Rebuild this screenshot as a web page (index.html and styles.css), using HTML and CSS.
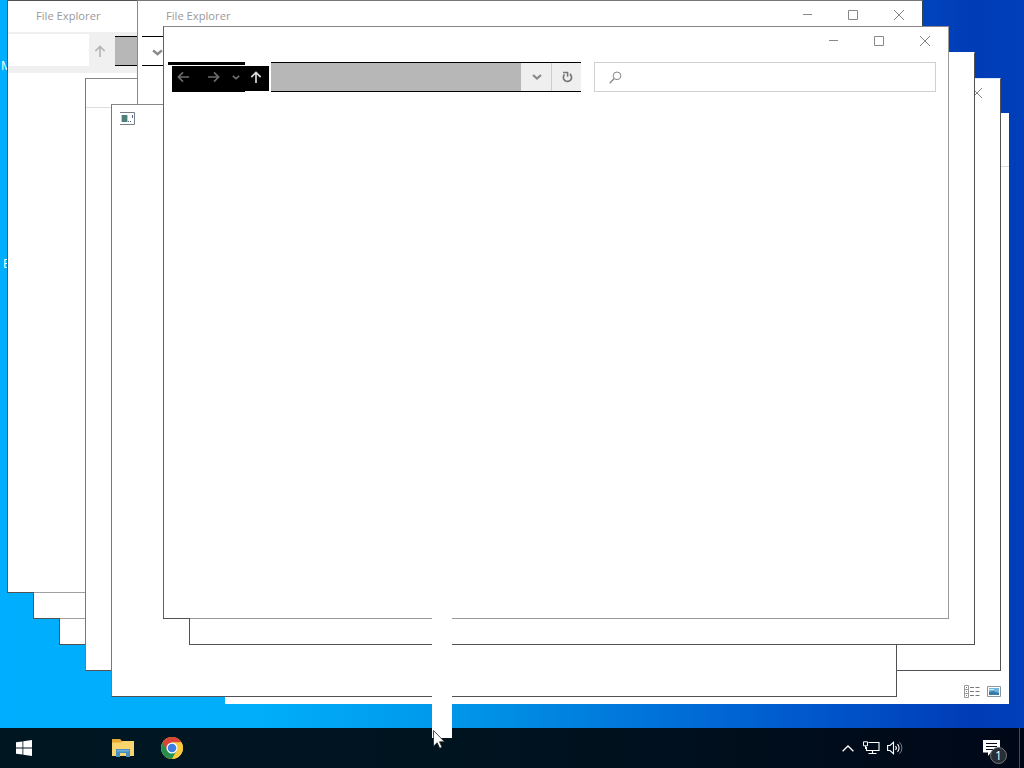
FILE: index.html
```html
<!DOCTYPE html>
<html lang="en">
<head>
    <meta charset="UTF-8">
    <meta name="viewport" content="width=device-width, initial-scale=1.0">
    <title>Desktop</title>
    <link rel="stylesheet" href="styles.css">
</head>
<body>
    <!-- shared icons -->
    <svg class="sprite">
        <symbol id="i-left" viewBox="0 0 14 12"><path d="M13 6H1.5M6.5 1L1.5 6l5 5" fill="none" stroke="currentColor" stroke-width="1.8"/></symbol>
        <symbol id="i-right" viewBox="0 0 14 12"><path d="M1 6h11.500M7.500 1l5 5-5 5" fill="none" stroke="currentColor" stroke-width="1.8"/></symbol>
        <symbol id="i-up" viewBox="0 0 12 14"><path d="M6 13V1.500M1 6.500l5-5 5 5" fill="none" stroke="currentColor" stroke-width="1.8"/></symbol>
        <symbol id="i-down" viewBox="0 0 10 6"><path d="M1 1l4 3.500L9 1" fill="none" stroke="currentColor" stroke-width="2.200"/></symbol>
        <symbol id="i-min" viewBox="0 0 10 10"><path d="M1 4.500h9" stroke="currentColor"/></symbol>
        <symbol id="i-max" viewBox="0 0 10 10"><path d="M.5.500h9v9h-9z" fill="none" stroke="currentColor"/></symbol>
        <symbol id="i-close" viewBox="0 0 10 10"><path d="M0 0l10 10M10 0L0 10" stroke="currentColor"/></symbol>
    </svg>

    <div class="desktop">
        <span class="label label-top">M</span>
        <span class="label label-mid">E</span>

        <div class="window w-back">
            <div class="head"></div>
            <div class="status">
                <svg width="16" height="13" viewBox="0 0 16 13"><path d="M.5.500h4v12h-4zM.5 4.500h4M.5 8.500h4" fill="none" stroke="#999"/><path d="M2 2.500h1M2 6.500h1M2 10.500h1M6 2.500h4M11.500 2.500h4M6 6.500h4M11.500 6.500h4M6 10.500h4M11.500 10.500h4" stroke="#777"/></svg>
                <svg width="14" height="11" viewBox="0 0 14 11"><path d="M.5.500h13v10H.5z" fill="#fff" stroke="#8a97a5"/><path d="M2 2h10v7H2z" fill="#72b5df"/><path d="M2 6l4-1 6 2v2H2z" fill="#3a7ba5"/><path d="M2 3h5v1H2z" fill="#c9e8f7"/></svg>
            </div>
        </div>

        <div class="window w-3"></div>
        <div class="window w-2"></div>
        <div class="window w-1">
            <div class="titlebar"><span class="title">File Explorer</span></div>
            <div class="nav nav-faded">
                <div class="blank"></div>
                <svg class="up" width="12" height="13"><use href="#i-up"/></svg>
                <div class="address"></div>
            </div>
        </div>

        <div class="window w-9">
            <div class="titlebar">
                <div class="controls"><i><svg><use href="#i-close"/></svg></i></div>
            </div>
        </div>
        <div class="window w-4"><div class="head"></div></div>
        <div class="window w-6">
            <div class="titlebar">
                <span class="title">File Explorer</span>
                <div class="controls">
                    <i><svg><use href="#i-min"/></svg></i>
                    <i><svg><use href="#i-max"/></svg></i>
                    <i><svg><use href="#i-close"/></svg></i>
                </div>
            </div>
            <div class="dropdown"><svg width="11" height="7"><use href="#i-down"/></svg></div>
        </div>
        <div class="window w-5">
            <svg class="app-icon" width="15" height="13" viewBox="0 0 15 13"><path d="M.5.500h14v12H.5z" fill="#fff"/><path d="M0 .5h14.500v12H0" fill="none" stroke="#757f85"/><path d="M2 3h5v7H2z" fill="#4d8078"/><path d="M1 3h1v7H1zM7 3h1v7H7z" fill="#b8cbd0"/><path d="M12.500 3v3M8 9.500h1M10 9.500h1" stroke="#568"/></svg>
        </div>
        <div class="window w-8"></div>
        <div class="window w-7">
            <div class="titlebar">
                <div class="controls">
                    <i><svg><use href="#i-min"/></svg></i>
                    <i><svg><use href="#i-max"/></svg></i>
                    <i><svg><use href="#i-close"/></svg></i>
                </div>
            </div>
            <div class="nav">
                <div class="history">
                    <div class="history-line"></div>
                    <div class="history-buttons">
                        <div class="back-forward">
                            <svg width="13" height="12"><use href="#i-left"/></svg>
                            <svg width="13" height="12"><use href="#i-right"/></svg>
                            <svg width="8" height="5"><use href="#i-down"/></svg>
                        </div>
                        <div class="parent"><svg width="12" height="13"><use href="#i-up"/></svg></div>
                    </div>
                </div>
                <div class="address">
                    <span class="btn"><svg width="10" height="6"><use href="#i-down"/></svg></span>
                    <span class="btn"><svg width="11" height="12" viewBox="0 0 11 12"><path d="M7.800 3A4.100 4.100 0 1 1 2.600 3.400" fill="none" stroke="#777" stroke-width="1.700"/><path d="M1 1.400h4.600v4.400" fill="none" stroke="#777" stroke-width="1.500"/></svg></span>
                </div>
                <div class="search">
                    <svg width="13" height="13" viewBox="0 0 13 13"><circle cx="8" cy="4.800" r="3.800" fill="none" stroke="#888"/><path d="M5.300 7.500L.7 12.200" stroke="#888" stroke-width="1.300"/></svg>
                </div>
            </div>
        </div>

        <div class="smear"></div>

        <div class="taskbar">
            <svg class="start" width="16" height="16" viewBox="0 0 16 16"><path d="M0 2.300l6.500-.9v6.100H0zM7.300 1.300L16 0v7.500H7.300zM0 8.400h6.500v6.200L0 13.700zM7.300 8.400H16V16l-8.700-1.200z" fill="#fff"/></svg>
            <svg class="folder" width="22" height="18" viewBox="0 0 22 18"><path d="M0 0h8l2 2h11.500v15H0z" fill="#e5a934"/><path d="M0 3.500h9l2-1.500h11v15H0z" fill="#f8d66d"/><path d="M4 10h14v8h-4v-4H8v4H4z" fill="#468fc2"/><path d="M5 11h12v1.500H5z" fill="#6cb0d8"/></svg>
            <svg class="chrome" width="22" height="22" viewBox="0 0 22 22"><circle cx="11" cy="11" r="11" fill="#f9ca3c"/><path d="M11 11L1.500 5.500a11 11 0 0 1 19 0H11z" fill="#dc4437"/><path d="M11 11L1.500 5.500A11 11 0 0 0 11 22l4.800-8.300z" fill="#25904d"/><path d="M11 5.500h9.500A11 11 0 0 1 11 22l4.800-8.300z" fill="#f9ca3c"/><path d="M11 5.500H1.500L6 13z" fill="#dc4437"/><circle cx="11" cy="11" r="5.500" fill="#fff"/><circle cx="11" cy="11" r="4.300" fill="#3d7ee0"/></svg>
            <div class="tray">
                <svg width="12" height="7" viewBox="0 0 12 7"><path d="M.6 6.300L6 1l5.400 5.300" fill="none" stroke="#fff" stroke-width="1.300"/></svg>
                <svg width="17" height="14" viewBox="0 0 17 14"><path d="M5.500 1.500h10.500v8H3.500V6M9.500 9.500v3M5.500 12.500h8" fill="none" stroke="#fff" stroke-width="1.100"/><path d="M.5.800h4v4h-4zM2.500 5v3" fill="none" stroke="#fff"/></svg>
                <svg width="16" height="14" viewBox="0 0 16 14"><path d="M.6 4.500H3L6.500 1.300v11.400L3 9.500H.6z" fill="none" stroke="#fff" stroke-width="1.100"/><path d="M8.500 5a3 3 0 0 1 0 4M10.500 3.200a5.400 5.400 0 0 1 0 7.600" fill="none" stroke="#fff" stroke-width="1.100"/><path d="M12.600 1.400a8 8 0 0 1 0 11.200" fill="none" stroke="#738090"/></svg>
            </div>
            <div class="notify">
                <svg width="17" height="16" viewBox="0 0 17 16"><path d="M0 0h17v12.500H8L5 16v-3.500H0z" fill="#fff"/><path d="M3 3.500h11M3 6.500h11M3 9.500h7" stroke="#000c1c" stroke-width="1.200"/></svg>
                <span class="count">1</span>
            </div>
        </div>

        <svg class="cursor" width="12" height="19" viewBox="0 0 12 19"><path d="M.5.500v15.700l3.700-3.500 2.500 5.600 2.300-1-2.500-5.500h5z" fill="#fff" stroke="#222" stroke-width=".8"/></svg>
    </div>
</body>
</html>
```

FILE: styles.css
```css
* {
    box-sizing: border-box;
    margin: 0;
    padding: 0;
}

body {
    font-family: 'Open Sans', 'Noto Sans', sans-serif;
    font-size: 11px;
    overflow: hidden;
}

svg {
    display: block;
    flex: none;
}

.sprite {
    position: absolute;
    width: 0;
    height: 0;
}

.desktop {
    position: relative;
    width: 1024px;
    height: 768px;
    overflow: hidden;
    background: linear-gradient(90deg, #00aeff 0%, #00aefa 25%, #0096e8 45%, #0070d8 65%, #0056cb 80%, #003cb6 95%, #003fba 100%);
}

.label {
    position: absolute;
    color: #fff;
    font-size: 12px;
    line-height: 14px;
}

.label-top {
    left: 1px;
    top: 59px;
}

.label-mid {
    left: 3px;
    top: 257px;
}

/* windows, each one cascades by 26px */
.window {
    position: absolute;
    width: 786px;
    height: 593px;
    background: #fff;
    border: 1px solid #505256;
}

/* the part of the lower border that lies on the wallpaper */
.w-1::after,
.w-2::after,
.w-7::after {
    content: '';
    position: absolute;
    left: -1px;
    bottom: -1px;
    width: 27px;
    height: 1px;
    background: #505256;
}

.w-back {
    left: 225px;
    top: 113px;
    width: 784px;
    height: 591px;
    border: none;
    display: flex;
    flex-direction: column;
    justify-content: space-between;
}

.w-back .head {
    height: 54px;
    border-bottom: 1px solid #ddd;
}

.status {
    display: flex;
    align-items: center;
    justify-content: flex-end;
    gap: 7px;
    height: 25px;
    padding-right: 8px;
}

.w-1 { left: 7px; top: 0; border-bottom-color: #a0a0a0; }
.w-2 { left: 33px; top: 26px; border-bottom-color: #a0a0a0; }
.w-3 { left: 59px; top: 52px; }
.w-4 { left: 85px; top: 78px; border-top-color: #888; border-left-color: #777; }
.w-5 { left: 111px; top: 104px; border-top-color: #888; border-left-color: #777; }
.w-6 { left: 137px; top: 0; border-top-color: #77777b; border-left-color: #888; border-right-color: #345; }
.w-7 { left: 163px; top: 26px; border-color: #888 #999 #999 #606060; }
.w-8 { left: 189px; top: 52px; border-top-color: #fff; }
.w-9 { left: 215px; top: 78px; border-top-color: #dde6f5; }

.w-4 .head {
    height: 29px;
    border-bottom: 1px solid #ddd;
}

.titlebar {
    display: flex;
    align-items: center;
    height: 29px;
    padding-left: 28px;
}

.title {
    color: #999;
    font-size: 11.2px;
    line-height: 28px;
}

.controls {
    display: flex;
    margin-left: auto;
}

.controls i {
    display: flex;
    align-items: center;
    justify-content: center;
    width: 46px;
    height: 27px;
    padding-bottom: 1px;
    color: #888;
}

.controls svg {
    width: 10px;
    height: 10px;
}

/* navigation row */
.nav {
    display: flex;
    height: 30px;
    margin-top: 6px;
    padding-left: 4px;
}

.nav-faded {
    width: 129px;
    height: 41px;
    margin-top: 2px;
    padding: 4px 0 7px;
    background: #f0f0f0;
    overflow: hidden;
}

.nav-faded .blank {
    flex: none;
    width: 81px;
    height: 32px;
    margin-top: -2px;
    background: #fff;
}

.nav-faded .up {
    margin: 9px 9px 0 5px;
    color: #b5b5b5;
}

.history {
    width: 103px;
}

.history-line {
    width: 77px;
    height: 3px;
    background: #000;
}

.history-buttons {
    display: flex;
    margin: 1px 0 0 4px;
}

.back-forward {
    display: flex;
    align-items: center;
    width: 73px;
    height: 26px;
    padding: 0 0 4px 5px;
    background: #000;
    color: #6c6c6c;
}

.back-forward svg:nth-child(2) {
    margin: 0 12px 0 17px;
}

.parent {
    width: 24px;
    height: 25px;
    padding: 5px 0 0 5px;
    background: #000;
    color: #ddd;
}

.address {
    display: flex;
    flex: none;
    justify-content: flex-end;
    width: 310px;
    height: 30px;
    border-top: 1px solid #000;
    border-bottom: 1px solid #000;
    background: #b7b7b7;
}

.btn {
    display: flex;
    align-items: center;
    justify-content: center;
    width: 30px;
    padding-left: 1px;
    background: #efefef;
    color: #888;
}

.btn + .btn {
    border-left: 1px solid #ccc;
}

.search {
    width: 342px;
    margin-left: 13px;
    padding: 8px 0 0 14px;
    border: 1px solid #d0d0d0;
}

.dropdown {
    width: 30px;
    height: 30px;
    margin: 6px 0 0 4px;
    padding: 12px 0 0 10px;
    border-top: 1px solid #000;
    border-bottom: 1px solid #000;
    color: #888;
}

.app-icon {
    margin: 7px 0 0 8px;
}

/* cleared trail above the pointer */
.smear {
    position: absolute;
    left: 432px;
    top: 618px;
    width: 20px;
    height: 120px;
    background: #fff;
    z-index: 2;
}

.cursor {
    position: absolute;
    left: 433px;
    top: 730px;
    z-index: 3;
}

.taskbar {
    position: absolute;
    left: 0;
    bottom: 0;
    display: flex;
    align-items: center;
    width: 1024px;
    height: 40px;
    padding: 0 4px 0 16px;
    background: linear-gradient(90deg, #001722, #001420 45%, #000818);
}

.folder {
    margin-left: 80px;
}

.chrome {
    margin-left: 27px;
}

.tray {
    display: flex;
    align-items: center;
    gap: 9px;
    margin-left: auto;
}

.tray svg:last-child {
    margin-left: -2px;
}

.notify {
    position: relative;
    width: 37px;
    height: 40px;
    margin-left: 80px;
    padding-top: 12px;
    border-right: 1px solid #444c58;
}

.count {
    position: absolute;
    left: 7px;
    top: 19px;
    width: 17px;
    height: 17px;
    border: 1px solid #777;
    border-radius: 50%;
    background: #292d35;
    color: #fff;
    font-size: 12px;
    line-height: 15px;
    text-align: center;
}
```
